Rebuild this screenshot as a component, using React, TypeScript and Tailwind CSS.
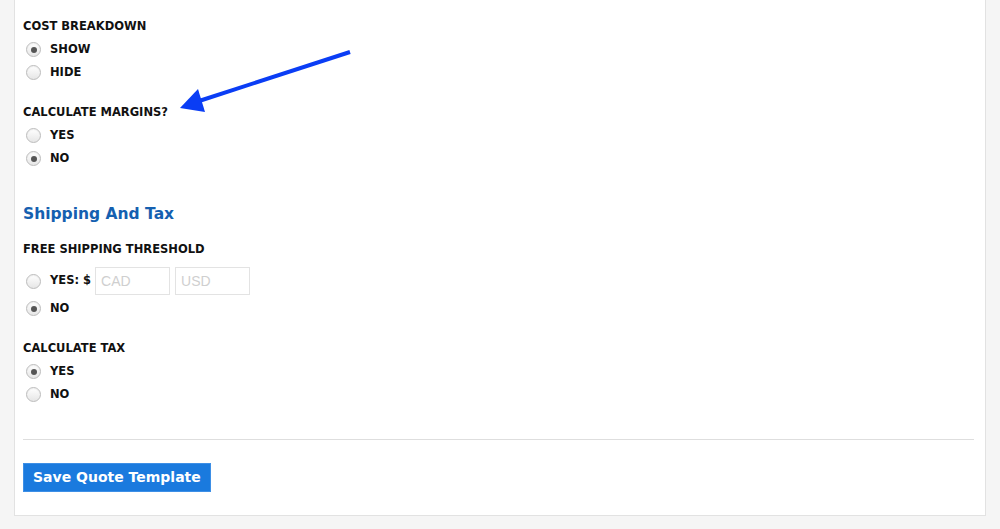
import React from 'react';

type Opt = { label: string; checked?: boolean };

const Radio = ({ checked }: { checked?: boolean }) => (
  <span className="ml-[3px] mr-[9px] flex h-[15px] w-[15px] shrink-0 items-center justify-center rounded-full border border-[#bcbcbc] bg-gradient-to-b from-white to-[#e6e6e6] shadow-[inset_0_1px_1px_rgba(0,0,0,0.06)]">
    {checked && <span className="h-[6px] w-[6px] rounded-full bg-[#555]" />}
  </span>
);

const RadioRow = ({ label, checked }: Opt) => (
  <div className="flex h-[23px] items-center">
    <Radio checked={checked} />
    <span className="text-[11.5px] font-bold text-[#111]">{label}</span>
  </div>
);

const Field = ({ title, options, className = '' }: { title: string; options: Opt[]; className?: string }) => (
  <div className={className}>
    <div className="flex h-[20px] items-center text-[11.5px] font-bold text-[#111]">{title}</div>
    <div className="mt-px">
      {options.map((o) => (
        <RadioRow key={o.label} label={o.label} checked={o.checked} />
      ))}
    </div>
  </div>
);

export default function App() {
  return (
    <div className="relative h-[529px] overflow-hidden bg-[#f5f5f5] px-[14px] font-['DejaVu_Sans',Verdana,sans-serif]">
      <div className="border border-t-0 border-[#e2e2e2] bg-white pb-[23px] pl-2 pr-[11px] pt-[17px]">
        <Field
          title="COST BREAKDOWN"
          options={[{ label: 'SHOW', checked: true }, { label: 'HIDE' }]}
        />
        <Field
          className="mt-[19px]"
          title="CALCULATE MARGINS?"
          options={[{ label: 'YES' }, { label: 'NO', checked: true }]}
        />

        <h2 className="mt-[33px] flex h-[24px] items-center text-[15.5px] font-bold text-[#1560b0]">
          Shipping And Tax
        </h2>

        <div className="mt-[13px]">
          <div className="flex h-[20px] items-center text-[11.5px] font-bold text-[#111]">
            FREE SHIPPING THRESHOLD
          </div>
          <div className="mt-[5px] flex h-[32px] items-center">
            <Radio />
            <span className="text-[11.5px] font-bold text-[#111]">YES: $</span>
            <input
              placeholder="CAD"
              className="ml-[4px] h-[28px] w-[75px] border border-[#e3e3e3] px-[5px] font-['Liberation_Sans',Arial,sans-serif] text-[14px] outline-none placeholder:text-[#cfcfcf]"
            />
            <input
              placeholder="USD"
              className="ml-[5px] h-[28px] w-[75px] border border-[#e3e3e3] px-[5px] font-['Liberation_Sans',Arial,sans-serif] text-[14px] outline-none placeholder:text-[#cfcfcf]"
            />
          </div>
          <RadioRow label="NO" checked />
        </div>

        <Field
          className="mt-[19px]"
          title="CALCULATE TAX"
          options={[{ label: 'YES', checked: true }, { label: 'NO' }]}
        />

        <hr className="mt-[33px] border-t border-[#dedede]" />

        <button className="mt-[23px] h-[29px] border border-[#3d8fe6] bg-[#1a7ade] px-[9px] text-[14px] font-bold text-white">
          Save Quote Template
        </button>
      </div>

      {/* annotation arrow */}
      <svg className="pointer-events-none absolute left-0 top-0" width="1000" height="529">
        <line x1="350" y1="52" x2="196" y2="102" stroke="#0a3df5" strokeWidth="4" />
        <polygon points="180,108 198,89 205,112" fill="#0a3df5" />
      </svg>
    </div>
  );
}
